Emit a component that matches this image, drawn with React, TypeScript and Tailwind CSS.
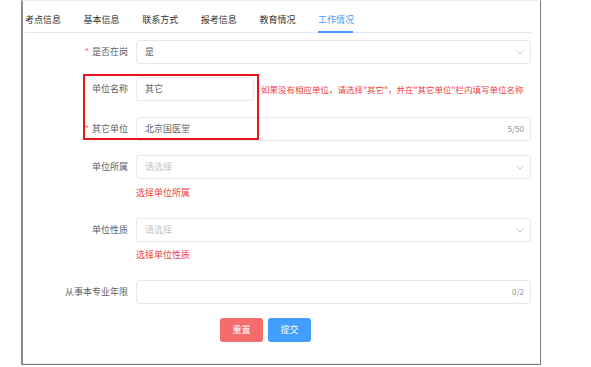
import React from "react";

const font = { fontFamily: '"Noto Sans CJK SC", "Liberation Sans", sans-serif' };

function Chevron() {
  return (
    <svg width="8" height="5" viewBox="0 0 8 5" className="shrink-0">
      <path d="M0.5 0.5 L4 4 L7.5 0.5" fill="none" stroke="#c0c4cc" strokeWidth="1" />
    </svg>
  );
}

function Label({ text, req }: { text: string; req?: boolean }) {
  return (
    <div className="w-[105px] shrink-0 text-right text-[9px] leading-[12px] text-[#606266]">
      {req && <span className="text-[#f56c6c] mr-[3px]">*</span>}
      {text}
    </div>
  );
}

function Box({ children, className = "" }: { children?: React.ReactNode; className?: string }) {
  return (
    <div
      className={
        "h-[24px] ml-[8px] flex items-center justify-between border border-[#e6e8ee] rounded-[3px] pl-[8px] pr-[6px] text-[9px] leading-[12px] bg-white " +
        className
      }
    >
      {children}
    </div>
  );
}

const tabs = ["考点信息", "基本信息", "联系方式", "报考信息", "教育情况", "工作情况"];

export default function App() {
  return (
    <div className="relative w-[591px] h-[367px] bg-white overflow-hidden" style={font}>
      <div className="ml-[21px] w-[520px] h-[365px] border-l-2 border-l-[#8c8c8c] border-r border-r-[#7a7a7a] border-b border-b-[#7a7a7a] border-t border-t-[#eeeeee]">
        <div className="h-full border-b border-b-[#ebeef5]">
          {/* Tabs */}
          <div className="ml-[2px] mr-[9px] flex border-b border-[#e4e7ed]">
            {tabs.map((t, i) => (
              <div key={t} className="relative h-[31px] w-[58.6px] pt-[13px]">
                <span
                  className={
                    "text-[9px] leading-[12px] block " +
                    (i === 5 ? "text-[#409eff]" : "text-[#303133]")
                  }
                >
                  {t}
                </span>
                {i === 5 && (
                  <div className="absolute left-0 bottom-[-1px] w-[35px] h-[2px] bg-[#409eff]" />
                )}
              </div>
            ))}
          </div>

          {/* Form */}
          <div className="mr-[9px]">
            <div className="flex items-center mt-[7px]">
              <Label text="是否在岗" req />
              <Box className="flex-1 text-[#606266]">
                <span>是</span>
                <Chevron />
              </Box>
            </div>

            <div className="flex items-center mt-[13px]">
              <Label text="单位名称" />
              <Box className="w-[118px] shrink-0 text-[#606266]">
                <span>其它</span>
              </Box>
              <span className="ml-[7px] text-[8.5px] leading-[12px] text-[#f23d3d] whitespace-nowrap">
                如果没有相应单位，请选择"其它"，并在"其它单位"栏内填写单位名称
              </span>
            </div>

            <div className="flex items-center mt-[16px]">
              <Label text="其它单位" req />
              <Box className="flex-1 text-[#606266]">
                <span>北京国医堂</span>
                <span className="text-[8px] text-[#909399]">5/50</span>
              </Box>
            </div>

            <div className="flex items-center mt-[14px]">
              <Label text="单位所属" />
              <Box className="flex-1">
                <span className="text-[#c0c4cc]">请选择</span>
                <Chevron />
              </Box>
            </div>
            <div className="ml-[113px] mt-[8px] text-[9px] leading-[12px] text-[#f23d3d]">选择单位所属</div>

            <div className="flex items-center mt-[19px]">
              <Label text="单位性质" />
              <Box className="flex-1">
                <span className="text-[#c0c4cc]">请选择</span>
                <Chevron />
              </Box>
            </div>
            <div className="ml-[113px] mt-[7px] text-[9px] leading-[12px] text-[#f23d3d]">选择单位性质</div>

            <div className="flex items-center mt-[19px]">
              <Label text="从事本专业年限" />
              <Box className="flex-1">
                <span />
                <span className="text-[8px] text-[#909399]">0/2</span>
              </Box>
            </div>

            <div className="flex mt-[14px] ml-[197px] gap-[5px]">
              <button className="w-[43px] h-[24px] rounded-[3px] bg-[#f56c6c] text-white text-[9px] leading-[12px]">
                重置
              </button>
              <button className="w-[43px] h-[24px] rounded-[3px] bg-[#409eff] text-white text-[9px] leading-[12px]">
                提交
              </button>
            </div>
          </div>
        </div>
      </div>

      {/* annotation highlight */}
      <div className="absolute left-[83px] top-[74px] w-[176px] h-[66px] border-2 border-[#e8141c]" />
    </div>
  );
}
